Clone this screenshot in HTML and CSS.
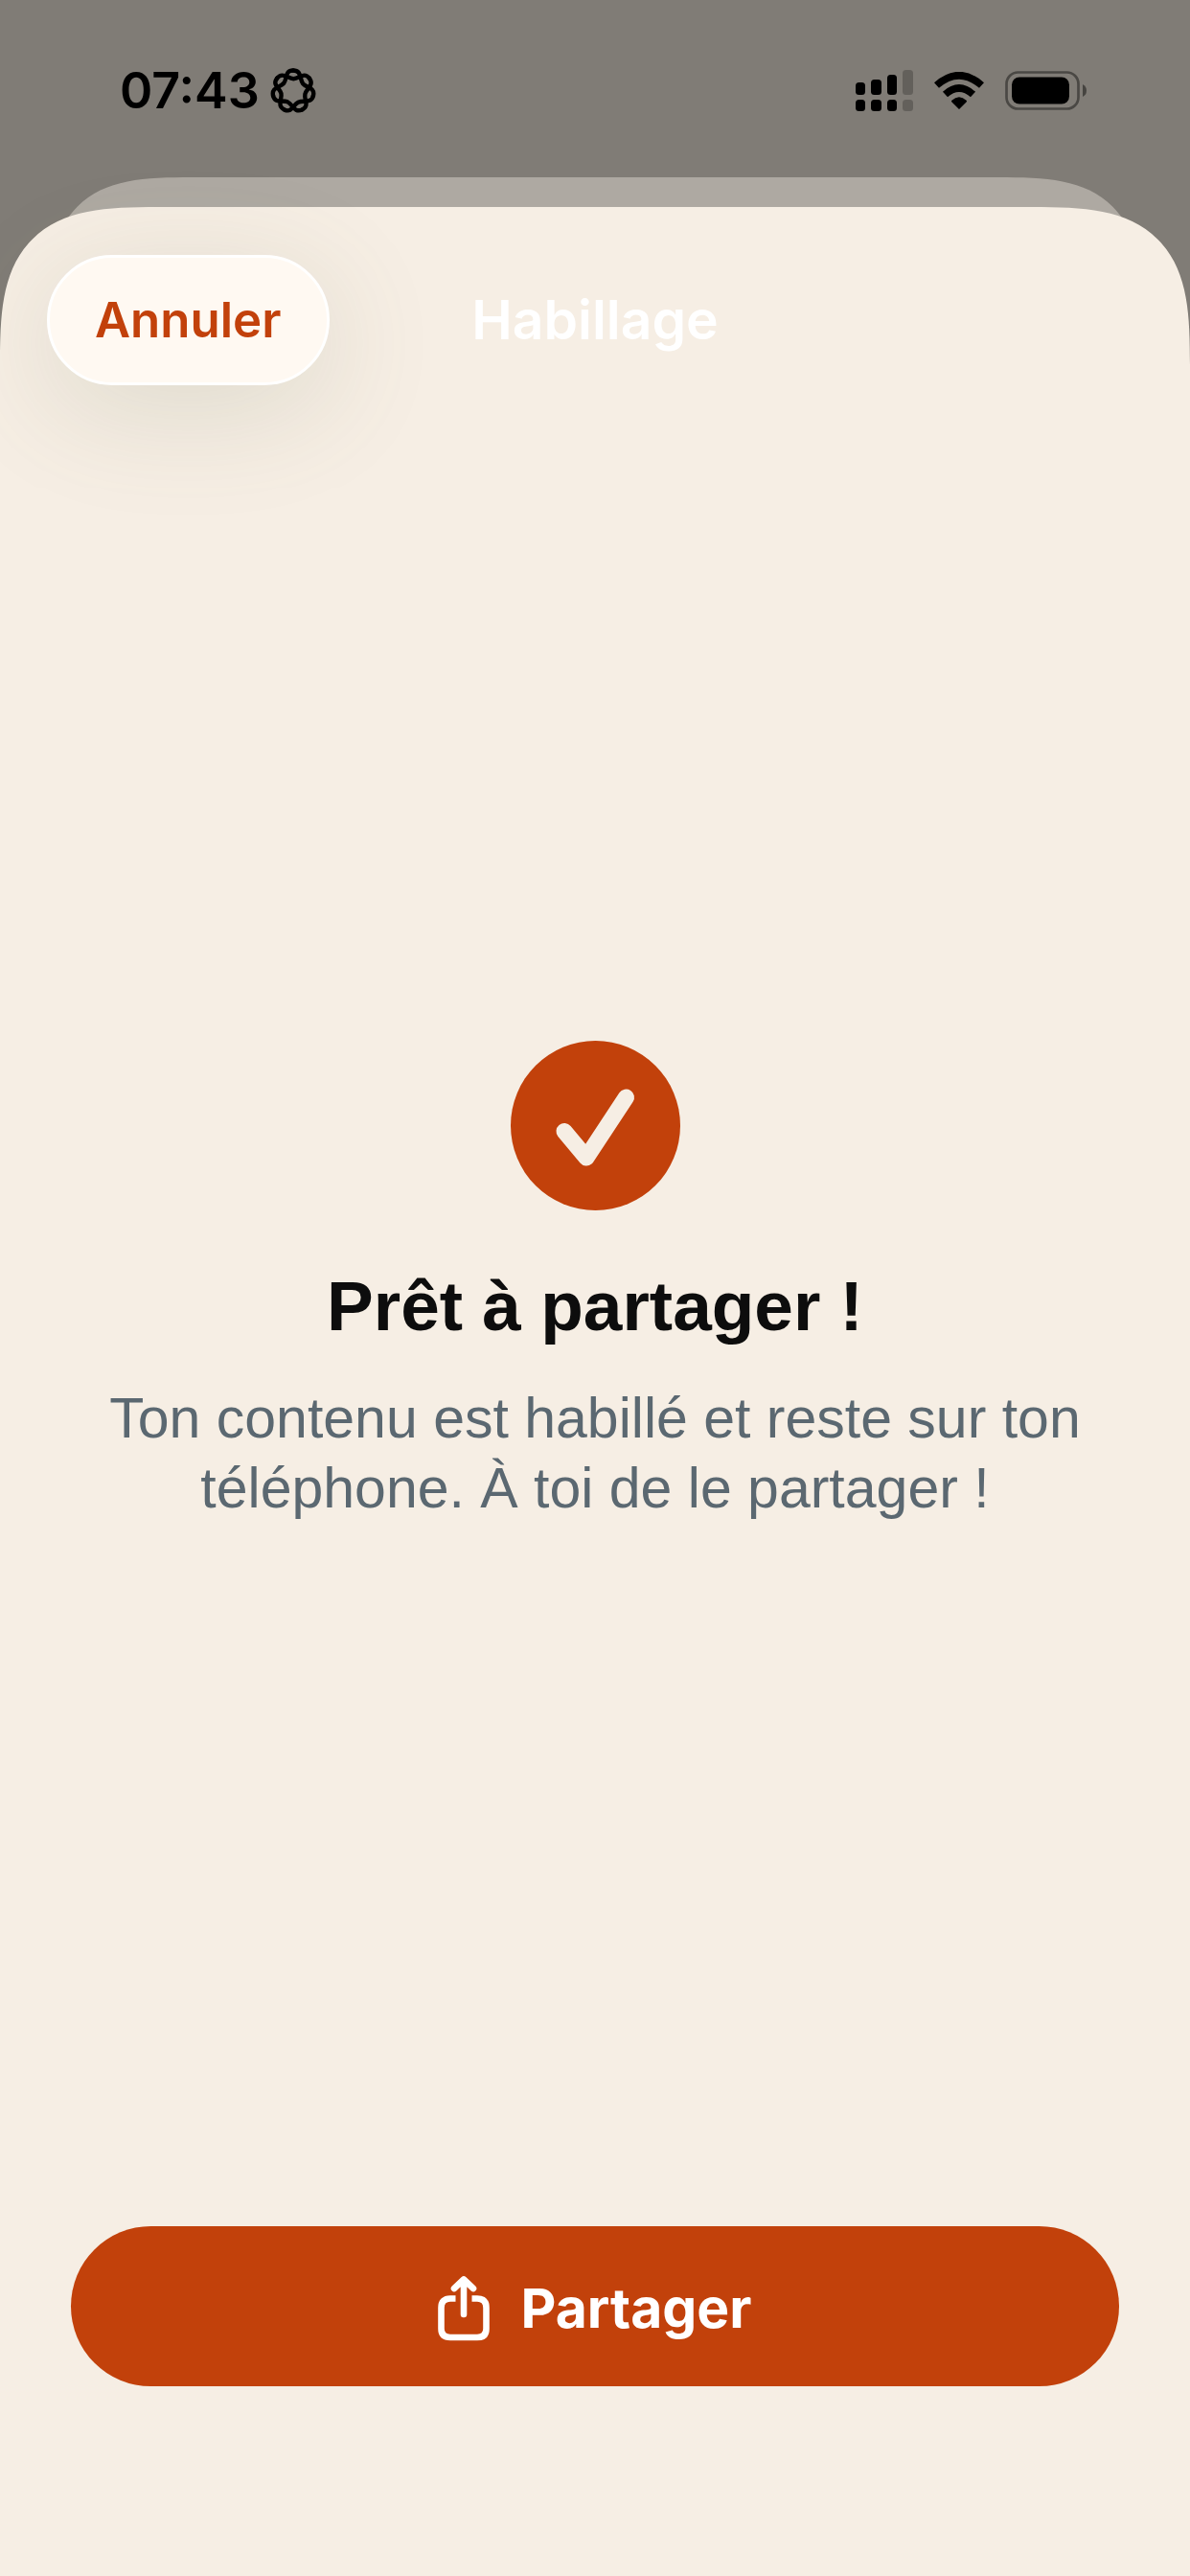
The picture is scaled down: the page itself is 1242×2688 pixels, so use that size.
FILE: index.html
```html
<!DOCTYPE html>
<html lang="fr">
<head>
<meta charset="UTF-8">
<meta name="viewport" content="width=device-width, initial-scale=1.0">
<title>Habillage</title>
<link rel="stylesheet" href="styles.css">
</head>
<body>
<div class="status-bar">
  <div class="status-left">
    <span class="time">07:43</span>
    <svg class="focus-icon" viewBox="-24 -24 48 48" width="48" height="48" aria-hidden="true">
      <defs>
        <path id="petal" d="M0-21.500C9-21.500 6.500-12.500 10.200-7.700C14-3 23-4 21 4.800"/>
      </defs>
      <g fill="none" stroke="#000" stroke-width="4.400" stroke-linecap="round">
        <use href="#petal"/>
        <use href="#petal" transform="rotate(51.43)"/>
        <use href="#petal" transform="rotate(102.86)"/>
        <use href="#petal" transform="rotate(154.29)"/>
        <use href="#petal" transform="rotate(205.71)"/>
        <use href="#petal" transform="rotate(257.14)"/>
        <use href="#petal" transform="rotate(308.57)"/>
      </g>
    </svg>
  </div>
  <div class="status-right">
    <svg viewBox="0 0 60 43" width="60" height="43" aria-hidden="true">
      <rect x="0" y="13" width="10" height="13" rx="3.5"/>
      <rect x="16" y="10" width="11" height="16" rx="3.5"/>
      <rect x="33" y="5" width="10" height="21" rx="3.5"/>
      <rect x="0" y="31" width="10" height="12" rx="3.5"/>
      <rect x="16" y="31" width="11" height="12" rx="3.5"/>
      <rect x="33" y="31" width="10" height="12" rx="3.5"/>
      <g opacity=".22">
        <rect x="49" y="0" width="11" height="26" rx="3.5"/>
        <rect x="49" y="31" width="11" height="12" rx="3.5"/>
      </g>
    </svg>
    <svg viewBox="0 0 52 39" width="52" height="39" aria-hidden="true">
      <path d="M26 39L18.2 31.2Q17.6 30.4 18.4 29.8Q26 22.6 33.6 29.8Q34.4 30.4 33.8 31.2Z"/>
      <path d="M11.5 23.5Q26 10.500 40.500 23.500" fill="none" stroke="#000" stroke-width="7.600"/>
      <path d="M2.500 14Q26-6.500 49.500 14" fill="none" stroke="#000" stroke-width="7.600"/>
    </svg>
    <svg viewBox="0 0 85 41" width="85" height="41" aria-hidden="true">
      <rect x="1.500" y="1.500" width="75" height="38" rx="12" fill="none" stroke="#000" stroke-opacity=".42" stroke-width="2.700"/>
      <rect x="7" y="6.500" width="60" height="28" rx="8"/>
      <path d="M81 14Q85 16 85 20.500Q85 25 81 27Z" fill-opacity=".45"/>
    </svg>
  </div>
</div>
<div class="sheet-behind"></div>
<div class="sheet">
  <header class="nav">
    <button class="cancel" type="button">Annuler</button>
    <h1 class="nav-title">Habillage</h1>
  </header>
  <main class="content">
    <svg class="check" viewBox="0 0 177 177" width="177" height="177" aria-hidden="true">
      <circle cx="88.500" cy="88.500" r="88.500" fill="#c2410b"/>
      <path d="M56 94.500L79 122L120.500 59" fill="none" stroke="#f6eee4" stroke-width="17" stroke-linecap="round" stroke-linejoin="round"/>
    </svg>
    <h2 class="headline">Prêt à partager !</h2>
    <p class="message">Ton contenu est habillé et reste sur ton téléphone. À toi de le partager !</p>
  </main>
  <footer class="actions">
    <button class="share" type="button">
      <svg viewBox="0 0 54 68" width="54" height="68" fill="none" stroke="#fff" stroke-width="6.600" aria-hidden="true">
        <path d="M18.500 23.500H13Q3.500 23.500 3.500 33V55Q3.500 64 13 64H41Q50.500 64 50.500 55V33Q50.500 23.500 41 23.500H35.500"/>
        <path d="M27 40V4M17 13L27 3.500L37 13" stroke-linecap="round" stroke-linejoin="round"/>
      </svg>
      Partager
    </button>
  </footer>
</div>
</body>
</html>
```
FILE: styles.css
```css
* { box-sizing: border-box; }
body { margin: 0; min-height: 100vh; display: flex; flex-direction: column; background-color: #807c76; font-family: Inter, "Liberation Sans", sans-serif; }
h1, h2, p { margin: 0; }
button { border: none; font-family: inherit; cursor: pointer; }
svg { display: block; flex: none; }

.status-bar { display: flex; justify-content: space-between; align-items: center; height: 185px; padding: 4px 108px 0 125px; }
.status-left { display: flex; align-items: center; gap: 11px; }
.status-right { display: flex; align-items: center; gap: 22px; }
.time { font-size: 52px; line-height: 62px; font-weight: 600; color: #000; }

/* top edge of the sheet underneath, then the sheet itself over it */
.sheet-behind { height: 160px; margin: 0 50px -129px; background-color: #aea9a2; border-radius: 110px 110px 0 0; }
.sheet { position: relative; flex: 1; display: flex; flex-direction: column; background-color: #f6eee4; border-radius: 120px 120px 0 0; }
@supports (corner-shape: superellipse(1.6)) {
  .sheet-behind { border-radius: 150px 150px 0 0; corner-shape: superellipse(1.6); }
  .sheet { border-radius: 165px 165px 0 0; corner-shape: superellipse(1.6); }
}

.nav { display: grid; grid-template-columns: 1fr auto 1fr; align-items: center; padding: 50px 49px 0; }
.cancel { justify-self: start; height: 136px; padding: 0 47px; border: 3px solid #fff; border-radius: 68px; background-color: #fff9f2; color: #c2410b; font-size: 51px; line-height: 60px; font-weight: 600; box-shadow: 0 24px 120px rgba(100, 110, 80, 0.16); }
.nav-title { font-size: 57px; line-height: 68px; font-weight: 600; color: #fff; }

.content { flex: 1; display: flex; flex-direction: column; align-items: center; justify-content: center; padding: 0 74px 50px; text-align: center; font-family: "Liberation Sans", Arial, sans-serif; }
.headline { margin-top: 57px; font-size: 73px; line-height: 86px; font-weight: 700; color: #0d0d0d; }
.message { margin-top: 38px; font-size: 59px; line-height: 73px; color: #5b6871; }

.actions { padding: 0 74px 198px; }
.share { display: flex; align-items: center; justify-content: center; gap: 32px; width: 100%; height: 167px; padding: 5px 0 0; border-radius: 84px; background-color: #c2410b; color: #fff; font-size: 57px; line-height: 68px; font-weight: 700; }
```
